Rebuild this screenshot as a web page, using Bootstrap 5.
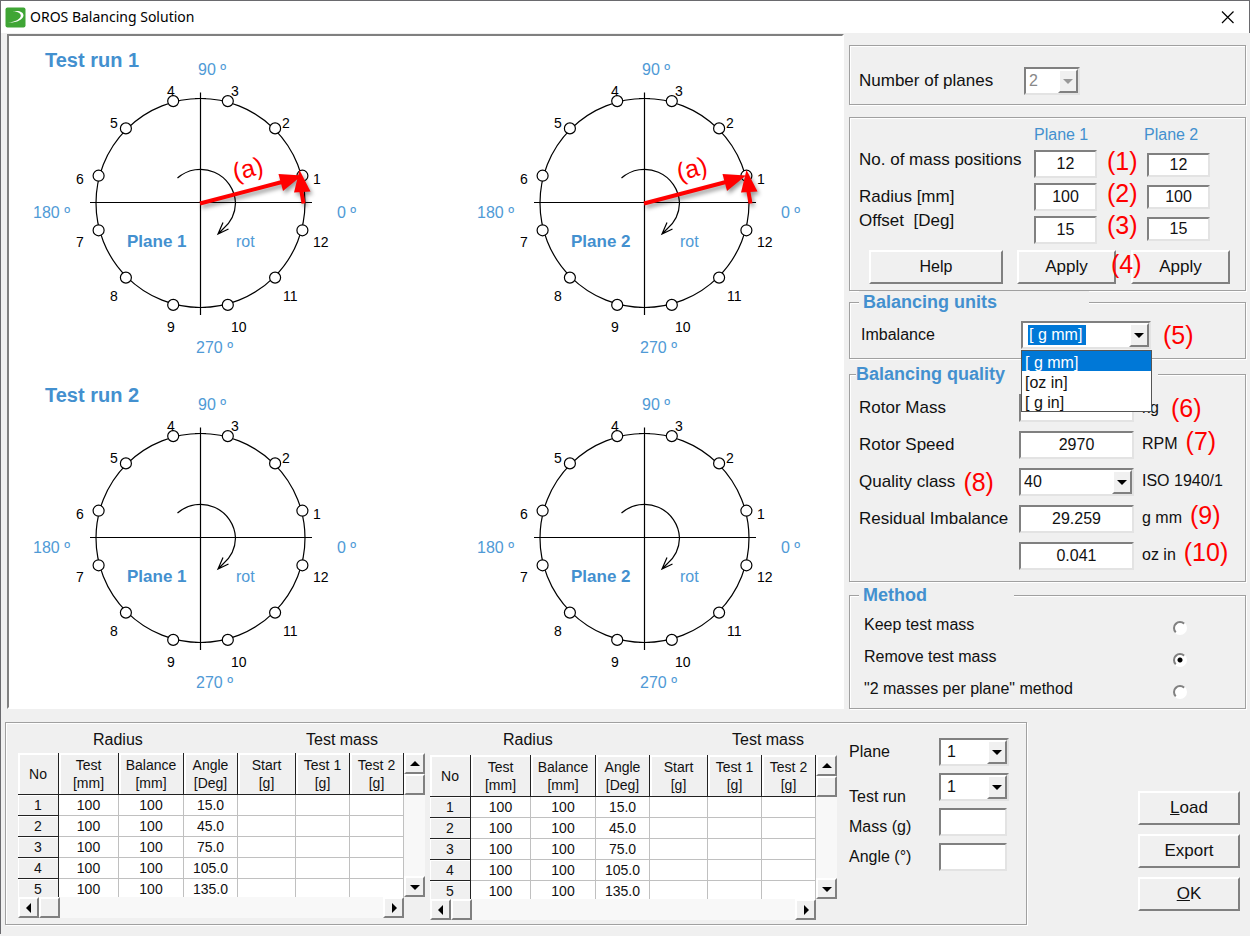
<!DOCTYPE html>
<html lang="en">
<head>
<meta charset="utf-8">
<meta name="viewport" content="width=device-width, initial-scale=1">
<title>OROS Balancing Solution</title>
<link href="https://cdn.jsdelivr.net/npm/bootstrap@5.3.0/dist/css/bootstrap.min.css" rel="stylesheet">
<style>
:root { --face: #f0f0f0; --line: #a0a0a0; --dark: #808080; --blue: #4390cf; --pick: #0078d7; }
body { background: var(--face); color: #111; font: 16px/24px "Liberation Sans", Arial, sans-serif; border-top: 1px solid #6a6a6e; border-left: 1px solid #6a6a6e; }
.titlebar { height: 32px; background: #fff; font: 14px/30px "Noto Sans", "Open Sans", sans-serif; color: #000; padding: 0 13px 0 4px; border-right: 1px solid #6a6a6e; }
.titlebar button { background: none; border: 0; padding: 0; line-height: 0; }
.workarea { padding: 1px 4px 0 6px; gap: 5px; }
.plot { background: #fff; border: 2px solid var(--dark); border-right-color: #fff; border-bottom-color: #fff; padding: 0 28px 0 21px; }
.run { display: grid; }
.run > * { grid-area: 1 / 1; }
.run h2 { font-size: 20px; line-height: 24px; font-weight: bold; color: var(--blue); margin: 12px 0 0 15px; justify-self: start; }
.dial { width: 340px; height: 335px; font-size: 14px; }
.dial .deg { font-size: 16px; fill: #4f9ad6; }
.dial .plane { font-size: 17px; font-weight: bold; fill: var(--blue); }
.dial .vec { filter: drop-shadow(2px 3px 2px rgba(0,0,0,.4)); }
.dial .veclabel { font-size: 25px; fill: #f00; text-anchor: middle; }
.side { flex: 0 0 397px; padding-top: 11px; }
.frame { border: 1px solid var(--line); box-shadow: 1px 1px #fff, inset 1px 1px #fff; margin: 0; padding: 0 9px; min-width: 0; }
.frame legend { float: none; font-size: 18px; line-height: 22px; font-weight: bold; color: var(--blue); background: var(--face); margin: 0; padding: 0 4px; }
.count { height: 60px; padding-top: 12px; }
.lab { font-size: 17px; white-space: nowrap; }
.mark-red { color: #f00; font-size: 25px; line-height: 24px; white-space: nowrap; }
.field, .combo select { display: block; width: 100%; height: 28px; border: 2px solid; border-color: var(--dark) #e3e3e3 #e3e3e3 var(--dark); border-radius: 0; background: #fff; color: #111; padding: 0 3px; font-size: 16px; line-height: 24px; appearance: none; }
.field { text-align: center; }
.field.low { height: 24px; line-height: 20px; }
.combo { position: relative; }
.combo::before { content: ""; position: absolute; right: 2px; top: 2px; bottom: 2px; width: 20px; background: var(--face); border: 2px solid; border-color: #fff var(--dark) var(--dark) #fff; pointer-events: none; z-index: 1; }
.combo::after { content: ""; position: absolute; right: 7px; top: 12px; border: 5px solid transparent; border-top-color: #000; border-bottom: 0; pointer-events: none; z-index: 1; }
.combo select:disabled { color: #888; opacity: 1; }
.combo.off::after { border-top-color: #999; }
.combo .picked { color: #fff; background: linear-gradient(var(--pick), var(--pick)) 5px center / 58px 20px no-repeat #fff; padding-left: 6px; }
.options { min-width: 0; width: 131px; margin: 0; top: 29px; left: 0; padding: 0; border: 1px solid #555; border-radius: 0; font-size: 16px; background: #fff; overflow: hidden; }
.options .dropdown-item { padding: 0 3px; line-height: 24px; height: 20px; color: #111; overflow: hidden; }
.options .dropdown-item.active { background: var(--pick); color: #fff; }
.push { background: var(--face); border: 2px solid; border-color: #fff var(--dark) var(--dark) #fff; border-radius: 0; color: #111; font-size: 17px; line-height: 24px; padding: 0; height: 34px; }
.push:hover { background: #e8e8e8; color: #111; border-color: #fff var(--dark) var(--dark) #fff; }
.plane-head { font-size: 16px; line-height: 28px; color: var(--blue); height: 24px; white-space: nowrap; }

.setup { padding: 3px 9px 5px; height: 174px; margin-top: 12px; }
.col-lab { width: 175px; padding-top: 27px; }
.col-lab .first { margin-bottom: 13px; }
.col-in { width: 63px; }
.col-in.one { gap: 5px; }
.col-in.two { gap: 8px; margin-left: 9px; }
.two .plane-head { margin-left: -3px; }
.reds { gap: 8px; padding-top: 28px; margin-left: 10px; width: 31px; }
.buttons { position: relative; padding: 6px 0 0 10px; }
.help { width: 134px; margin-right: 14px; font-size: 16px; }
.apply { width: 99px; margin-right: 15px; }
.apply.last { margin-right: 0; }
.over { position: absolute; left: 252px; top: 8px; }

.units { height: 68px; }
.units > div { padding-top: 8px; }
.quality { height: 219px; margin-top: 4px; }
.frame.quality legend { padding-left: 0; margin-left: -3px; }
.quality .qrow:first-of-type { margin-top: 4px; }
.qrow { height: 37px; }
.qrow .lab-cell { width: 160px; }
.qrow .in-cell { width: 115px; }
.qrow .unit { padding-bottom: 2px; white-space: nowrap; }
.qrow .mark-red.up { padding-bottom: 8px; }
.method { height: 125px; margin-top: 2px; }
.method legend { margin-bottom: 3px; }
.mrow { height: 32px; padding: 0 49px 0 5px; }
.mrow input { appearance: none; width: 14px; height: 14px; margin: 6px 0 0; border: 2px solid; border-color: var(--dark) #fff #fff var(--dark); border-radius: 50%; background: #fff; }
.mrow input:checked { background: radial-gradient(circle, #000 0 2px, #fff 3px); }

.lower { padding: 13px 10px 9px 4px; }
.lower .frame { flex: 0 0 1022px; padding: 0 17px 0 12px; height: 203px; }
.grid-sec { width: 408px; }
.grid-sec.second { margin-left: 4px; }
.caps { height: 30px; line-height: 34px; padding: 0 48px 0 75px; }
.grid-sec.second .caps { height: 32px; padding: 0 34px 0 73px; }
.sheet { height: 144px; overflow: hidden; }
.sheet .table { width: 386px; table-layout: fixed; border-collapse: separate; border-spacing: 0; font-size: 14px; text-align: center; margin: 0; }
.sheet .table > * > tr > * { padding: 0; font-weight: normal; color: #111; line-height: 20px; height: 21px; border: 0 solid #c0c0c0; border-width: 0 1px 1px 0; background: #fff; box-shadow: none; vertical-align: middle; }
.sheet .table > thead > tr > th { line-height: 18px; height: 42px; background: var(--face); border: 0 solid #222; border-width: 0 1px 1px 0; box-shadow: inset 2px 2px #fff; }
.sheet .table > tbody > tr > th { background: var(--face); border-color: #222; box-shadow: inset 1px 1px #fff; }
.track { background: #f8f8f8; }
.track.v { width: 21px; height: 144px; }
.track.h { width: 386px; height: 21px; }
.nub { background: var(--face); border: 2px solid; border-color: #fff var(--dark) var(--dark) #fff; width: 21px; height: 21px; padding: 0; line-height: 0; flex: none; }
.nub svg { display: block; margin: auto; }
.entry { margin-left: 11px; }
.entry .lab { font-size: 16px; line-height: 30px; }
.entry-labels { width: 90px; padding-top: 14px; }
.entry-labels .first { margin-bottom: 15px; }
.entry-fields { width: 70px; padding-top: 15px; gap: 7px; }
.entry-fields .field { width: 68px; }
.entry-fields select { padding-left: 6px; }
.actions { width: 102px; padding-top: 69px; gap: 9px; }
.actions .push { height: 34px; line-height: 28px; }
</style>
</head>
<body>
<header class="titlebar d-flex align-items-center justify-content-between">
  <div class="d-flex align-items-center gap-1">
    <svg width="21" height="21" viewBox="0 0 21 21" aria-hidden="true"><rect width="20" height="20" x=".5" y=".5" rx="2" fill="#3fa535"/><path d="M8 4.500C13 3 18.500 4.500 18.500 8.500C18 13 11 16 3 15.500C10 15 16 12 15.800 8.500C15.500 5.500 12 4.800 8 4.500Z" fill="#fff"/></svg>
    <span>OROS Balancing Solution</span>
  </div>
  <button type="button" aria-label="Close"><svg width="17" height="13" viewBox="0 0 17 13"><path d="M3 .500L14.500 12M14.500 .500L3 12" stroke="#000" stroke-width="1.200"/></svg></button>
</header>

<main>
<div class="workarea d-flex">
  <section class="plot flex-grow-1">
    <div class="run"><h2>Test run 1</h2><div class="dials d-flex justify-content-between" data-vectors="1"></div></div>
    <div class="run"><h2>Test run 2</h2><div class="dials d-flex justify-content-between"></div></div>
  </section>

  <form class="side">
    <div class="frame count d-flex align-items-center">
      <label class="lab" for="planes" style="width:165px">Number of planes</label>
      <div class="combo off" style="width:56px"><select id="planes" disabled><option>2</option></select></div>
    </div>

    <div class="frame setup">
      <div class="d-flex">
        <div class="col-lab d-flex flex-column">
          <label class="lab first" for="n1">No. of mass positions</label>
          <label class="lab" for="r1">Radius [mm]</label>
          <label class="lab" for="o1">Offset&nbsp; [Deg]</label>
        </div>
        <div class="col-in one d-flex flex-column">
          <div class="plane-head">Plane 1</div>
          <input class="field" id="n1" value="12"><input class="field" id="r1" value="100"><input class="field" id="o1" value="15">
        </div>
        <div class="reds d-flex flex-column"><span class="mark-red">(1)</span><span class="mark-red">(2)</span><span class="mark-red">(3)</span></div>
        <div class="col-in two d-flex flex-column">
          <div class="plane-head">Plane 2</div>
          <input class="field low" aria-label="No. of mass positions, plane 2" value="12"><input class="field low" aria-label="Radius, plane 2" value="100"><input class="field low" aria-label="Offset, plane 2" value="15">
        </div>
      </div>
      <div class="buttons d-flex">
        <button type="button" class="btn push help">Help</button>
        <button type="button" class="btn push apply">Apply</button>
        <button type="button" class="btn push apply last">Apply</button>
        <span class="mark-red over">(4)</span>
      </div>
    </div>

    <fieldset class="frame units">
      <legend style="width:230px">Balancing units</legend>
      <div class="d-flex align-items-center">
        <label for="imb" style="width:162px;padding-left:2px">Imbalance</label>
        <div class="combo" style="width:130px"><select id="imb" class="picked"><option>[ g mm]</option><option>[oz in]</option><option>[ g in]</option></select>
          <ul class="dropdown-menu show options" role="listbox">
            <li class="dropdown-item active" role="option" aria-selected="true">[ g mm]</li>
            <li class="dropdown-item" role="option">[oz in]</li>
            <li class="dropdown-item" role="option">[ g in]</li>
          </ul>
        </div>
        <span class="mark-red ms-2 ps-1">(5)</span>
      </div>
    </fieldset>

    <fieldset class="frame quality">
      <legend style="width:302px">Balancing quality</legend>
      <div class="qrow d-flex align-items-center gap-2"><div class="d-flex align-items-center"><div class="lab-cell"><label class="lab" for="mass">Rotor Mass</label></div><div class="in-cell"><input class="field" id="mass"></div></div><span>kg</span><span class="mark-red ms-1">(6)</span></div>
      <div class="qrow d-flex align-items-center gap-2"><div class="d-flex align-items-center"><div class="lab-cell"><label class="lab" for="speed">Rotor Speed</label></div><div class="in-cell"><input class="field" id="speed" value="2970"></div></div><span class="unit">RPM</span><span class="mark-red up">(7)</span></div>
      <div class="qrow d-flex align-items-center gap-2"><div class="d-flex align-items-center"><div class="lab-cell d-flex"><label class="lab" for="cls">Quality class</label><span class="mark-red ms-2">(8)</span></div><div class="in-cell combo"><select id="cls"><option>40</option></select></div></div><span class="unit">ISO 1940/1</span></div>
      <div class="qrow d-flex align-items-center gap-2"><div class="d-flex align-items-center"><div class="lab-cell"><label class="lab" for="res">Residual Imbalance</label></div><div class="in-cell"><input class="field" id="res" value="29.259"></div></div><span class="unit">g mm</span><span class="mark-red up">(9)</span></div>
      <div class="qrow d-flex align-items-center gap-2"><div class="d-flex align-items-center"><div class="lab-cell"></div><div class="in-cell"><input class="field" aria-label="Residual imbalance, oz in" value="0.041"></div></div><span class="unit">oz in</span><span class="mark-red up">(10)</span></div>
    </fieldset>

    <fieldset class="frame method">
      <legend style="width:155px">Method</legend>
      <div class="mrow d-flex align-items-center justify-content-between"><label for="m1">Keep test mass</label><input type="radio" name="m" id="m1"></div>
      <div class="mrow d-flex align-items-center justify-content-between"><label for="m2">Remove test mass</label><input type="radio" name="m" id="m2" checked></div>
      <div class="mrow d-flex align-items-center justify-content-between"><label for="m3">"2 masses per plane" method</label><input type="radio" name="m" id="m3"></div>
    </fieldset>
  </form>
</div>

<div class="lower d-flex justify-content-between">
  <div class="frame d-flex">
    <section class="grid-sec"></section>
    <section class="grid-sec second"></section>
    <form class="entry d-flex">
      <div class="d-flex flex-column entry-labels">
        <label class="lab first" for="pl">Plane</label><label class="lab" for="tr">Test run</label><label class="lab" for="ma">Mass (g)</label><label class="lab" for="an">Angle (°)</label>
      </div>
      <div class="d-flex flex-column entry-fields">
        <div class="combo"><select id="pl"><option>1</option><option>2</option></select></div>
        <div class="combo"><select id="tr"><option>1</option><option>2</option></select></div>
        <input class="field" id="ma"><input class="field" id="an">
      </div>
    </form>
  </div>
  <div class="actions d-flex flex-column">
    <button type="button" class="btn push"><u>L</u>oad</button>
    <button type="button" class="btn push">Export</button>
    <button type="button" class="btn push"><u>O</u>K</button>
  </div>
</div>
</main>

<script>
// Labels of the twelve mass positions: text, x, y from the dial centre
const marks = [["1",113,-19],["2",82,-75],["3",31,-107],["4",-33,-107],["5",-90,-75],["6",-124,-19],
  ["7",-124,44],["8",-90,98],["9",-33,129],["10",31,129],["11",83,98],["12",113,44]];

function dial(plane, vectors) {
  let s = `<svg class="dial" viewBox="-170 -167 340 335" role="img" aria-label="Plane ${plane}">
    <g fill="none" stroke="#000" stroke-width="1.2">
      <circle cx=".5" cy="0" r="104.5"/><path d="M-110 -.500H112M.500 -110.500V112M-5 -104.500H6M-5 104.500H6"/>
      <path d="M-22.500 -25A35 35 0 0 1 35.500 0A35 35 0 0 1 23 26L18 31M23 19.500L18 31L28.500 26"/></g>`;
  marks.forEach((m, i) => {
    const a = (15 + 30 * i) * Math.PI / 180;
    s += `<circle cx="${(.5 + 105.5 * Math.cos(a)).toFixed(1)}" cy="${(-105.5 * Math.sin(a)).toFixed(1)}" r="5.5" fill="#fff" stroke="#000" stroke-width="1.2"/>
      <text x="${m[1]}" y="${m[2]}">${m[0]}</text>`;
  });
  s += `<text class="deg" x="-2" y="-128">90 º</text><text class="deg" x="137" y="15">0 º</text>
    <text class="deg" x="-167" y="15">180 º</text><text class="deg" x="-4" y="150">270 º</text>
    <text class="plane" x="-73" y="44">Plane ${plane}</text><text class="deg" x="36" y="44">rot</text>`;
  if (vectors) {
    const d = plane === 2 ? 3 : 0;
    s += `<g class="vec"><path d="M0 .500L82 -21" stroke="#f00" stroke-width="4"/><path d="M102 -27.500L78.500 -29L83 -12Z" fill="#f00"/>
      <g transform="translate(${d} 0)"><path d="M103.500 .500L101 -14" stroke="#f00" stroke-width="4"/><path d="M99.500 -33L94 -10.500L110.500 -11.500Z" fill="#f00"/></g></g>
      <text class="veclabel" transform="translate(50 -26) rotate(-15)">(a)</text>`;
  }
  return s + "</svg>";
}
document.querySelectorAll(".dials").forEach(el => el.innerHTML = dial(1, el.dataset.vectors) + dial(2, el.dataset.vectors));

const heads = [["No",""],["Test","[mm]"],["Balance","[mm]"],["Angle","[Deg]"],["Start","[g]"],["Test 1","[g]"],["Test 2","[g]"]];
const widths = [41, 60, 65, 54, 58, 54, 54];
const nub = (name, pts) => `<button type="button" class="nub" aria-label="${name}"><svg width="10" height="10"><polygon points="${pts}"/></svg></button>`;
const rows = ["15.0","45.0","75.0","105.0","135.0"].map((a, i) =>
  `<tr><th scope="row">${i + 1}</th><td>100</td><td>100</td><td>${a}</td><td></td><td></td><td></td></tr>`).join("");
document.querySelectorAll(".grid-sec").forEach(el => el.innerHTML = `
  <div class="caps d-flex justify-content-between"><span>Radius</span><span>Test mass</span></div>
  <div class="d-flex"><div class="sheet"><table class="table">
    <colgroup>${widths.map(w => `<col style="width:${w}px">`).join("")}</colgroup>
    <thead><tr>${heads.map(h => `<th scope="col">${h[0]}${h[1] ? "<br>" + h[1] : ""}</th>`).join("")}</tr></thead>
    <tbody>${rows}</tbody></table></div>
    <div class="track v d-flex flex-column">${nub("Up", "0,7 5,2 10,7")}<span class="nub"></span><span class="flex-grow-1"></span>${nub("Down", "0,3 5,8 10,3")}</div></div>
  <div class="track h d-flex">${nub("Left", "7,0 2,5 7,10")}<span class="nub"></span><span class="flex-grow-1"></span>${nub("Right", "3,0 8,5 3,10")}</div>`);
</script>
<script src="https://cdn.jsdelivr.net/npm/bootstrap@5.3.0/dist/js/bootstrap.bundle.min.js"></script>
</body>
</html>
